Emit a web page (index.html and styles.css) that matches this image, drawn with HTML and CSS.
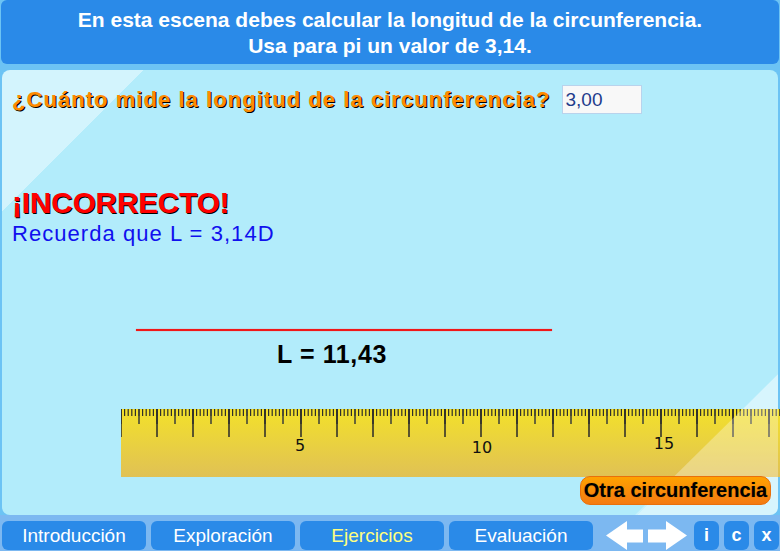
FILE: index.html
```html
<!DOCTYPE html>
<html lang="es">
<head>
<meta charset="utf-8">
<title>Longitud de la circunferencia</title>
<link rel="stylesheet" href="styles.css">
</head>
<body>
<div class="app">
  <header class="header">
    <div>En esta escena debes calcular la longitud de la circunferencia.</div>
    <div>Usa para pi un valor de 3,14.</div>
  </header>

  <main class="panel">
    <div class="q-row">
      <span class="question">¿Cuánto mide la longitud de la circunferencia?</span>
      <input class="answer" type="text" value="3,00">
    </div>

    <div class="feedback">
      <div class="wrong">¡INCORRECTO!</div>
      <div class="hint">Recuerda que L = 3,14D</div>
    </div>

    <div class="segment"></div>
    <div class="length">L = 11,43</div>

    <svg class="ruler" width="659" height="68" viewBox="0 0 659 68">
      <defs>
        <linearGradient id="yel" x1="0" y1="0" x2="0" y2="1">
          <stop offset="0" stop-color="#f3e12a"/>
          <stop offset="1" stop-color="#e0c155"/>
        </linearGradient>
      </defs>
      <rect x="0" y="0" width="659" height="68" fill="url(#yel)"/>
      <line x1="-0.6" y1="3.5" x2="659" y2="3.5" stroke="#2f2f2a" stroke-width="7" stroke-dasharray="1.2 2.4"/>
      <line x1="-0.75" y1="7.5" x2="659" y2="7.5" stroke="#3c3f38" stroke-width="15" stroke-dasharray="1.5 16.5"/>
      <line x1="-0.75" y1="14" x2="659" y2="14" stroke="#2a2a28" stroke-width="28" stroke-dasharray="1.5 34.5"/>
      <text x="179" y="42" class="rnum" text-anchor="middle">5</text>
      <text x="361" y="43.5" class="rnum" text-anchor="middle">10</text>
      <text x="543" y="39.5" class="rnum" text-anchor="middle">15</text>
    </svg>

    <button class="other">Otra circunferencia</button>
  </main>

  <nav class="nav">
    <button class="tab">Introducción</button>
    <button class="tab">Exploración</button>
    <button class="tab active">Ejercicios</button>
    <button class="tab">Evaluación</button>
    <svg class="arrows" width="81" height="29" viewBox="0 0 81 29">
      <polygon points="0,14.5 21,0 21,8.5 37,8.5 37,21.5 21,21.5 21,29" fill="#ffffff"/>
      <polygon points="81,14.5 60,0 60,8.5 42,8.5 42,21.5 60,21.5 60,29" fill="#ffffff"/>
    </svg>
    <button class="mini first">i</button>
    <button class="mini">c</button>
    <button class="mini">x</button>
  </nav>
</div>
</body>
</html>
```

FILE: styles.css
```css
* { box-sizing: border-box; }

html, body {
  margin: 0;
  padding: 0;
}

body {
  width: 780px;
  height: 551px;
  overflow: hidden;
  background: #6cc3f4;
  font-family: "Liberation Sans", Arial, sans-serif;
}

.app {
  display: flex;
  flex-direction: column;
  height: 551px;
}

.header {
  height: 64px;
  margin: 0 1px;
  padding-top: 7px;
  border-radius: 6px;
  background: #2a8ae8;
  color: #ffffff;
  font-weight: bold;
  font-size: 21px;
  line-height: 26px;
  text-align: center;
}

.panel {
  position: relative;
  display: flex;
  flex-direction: column;
  height: 445px;
  margin: 6px 2px 0;
  border-radius: 8px;
  background:
    linear-gradient(135deg, #d3f4fd 0 100px, rgba(211,244,253,0) 100px),
    linear-gradient(135deg, rgba(196,240,252,0) 0 764px, #c6f1fc 764px),
    #b2ecfb;
}

.panel::after {
  content: "";
  position: absolute;
  inset: 0;
  border-radius: 8px;
  background: rgba(255, 255, 255, 0.3);
  clip-path: polygon(776px 304px, 776px 445px, 633px 445px);
  pointer-events: none;
  z-index: 1;
}

.q-row {
  display: flex;
  align-items: center;
  gap: 12px;
  padding: 15px 0 0 10px;
}

.question {
  color: #ff8a00;
  font-weight: bold;
  font-size: 22px;
  letter-spacing: 1.05px;
  text-shadow: 1px 1px 0 #000000;
}

.answer {
  width: 80px;
  height: 29px;
  margin: 0;
  padding: 0 0 0 2px;
  border: 1px solid #b9d3ec;
  background: #f8f8f8;
  color: #1f3c8c;
  font-family: "Liberation Sans", Arial, sans-serif;
  font-size: 19px;
}

.feedback {
  margin-top: 74px;
  padding-left: 10px;
}

.wrong {
  color: #ff0000;
  font-weight: bold;
  font-size: 29.5px;
  line-height: 30px;
  text-shadow: 1px 1px 0 #000000;
}

.hint {
  margin-top: 4px;
  color: #1010ee;
  font-size: 22px;
  line-height: 24px;
  letter-spacing: 1.05px;
}

.segment {
  width: 416px;
  height: 2px;
  margin: 83px 0 0 134px;
  background: #f01818;
  box-shadow: 0 0 1px #ff4040;
}

.length {
  margin: 9px 0 0 275px;
  color: #000000;
  font-weight: bold;
  font-size: 25px;
  line-height: 28px;
  letter-spacing: 0.6px;
}

.ruler {
  display: block;
  margin: 41px 0 0 119px;
}

.rnum {
  font-family: "DejaVu Sans", sans-serif;
  font-size: 16px;
  fill: #111111;
}

.other {
  position: relative;
  z-index: 2;
  align-self: flex-end;
  width: 191px;
  height: 29px;
  margin: -1px 7px 0 0;
  padding: 0;
  border: 1px solid #e8700c;
  border-radius: 10px;
  background: linear-gradient(#ffa200, #f47a12);
  color: #000000;
  font-family: "Liberation Sans", Arial, sans-serif;
  font-weight: bold;
  font-size: 20px;
  text-shadow: 0 0 1px rgba(0,0,0,0.3);
}

.nav {
  display: flex;
  align-items: center;
  gap: 5px;
  flex: 1;
  margin-top: 0;
  padding: 5px 0 0 2px;
  background: #7cb8f1;
}

.tab {
  width: 144px;
  height: 29px;
  margin: 0;
  padding: 0;
  border: none;
  border-radius: 6px;
  background: #2a8ae8;
  color: #ffffff;
  font-family: "Liberation Sans", Arial, sans-serif;
  font-size: 19px;
}

.tab.active {
  color: #ffff80;
}

.arrows {
  display: block;
  margin-left: 8px;
}

.mini {
  width: 25px;
  height: 29px;
  margin: 0;
  padding: 0;
  border: none;
  border-radius: 6px;
  background: #2a8ae8;
  color: #ffffff;
  font-family: "Liberation Sans", Arial, sans-serif;
  font-weight: bold;
  font-size: 18px;
}

.mini.first {
  margin-left: 2px;
}
```
